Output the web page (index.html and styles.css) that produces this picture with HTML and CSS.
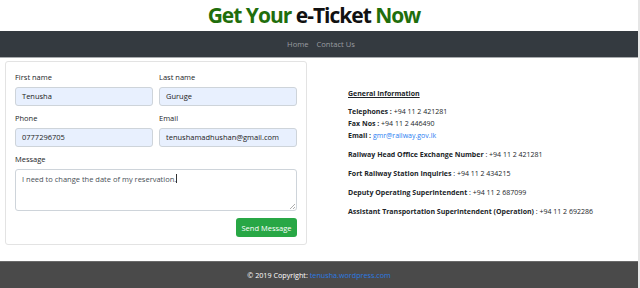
FILE: index.html
```html
<!DOCTYPE html>
<html>
<head>
<meta charset="utf-8">
<link rel="stylesheet" href="styles.css">
</head>
<body>
<div class="page">
  <h1 class="title"><span class="g">Get Your</span> e-Ticket <span class="g">Now</span></h1>
  <nav class="nav">
    <a class="nav-link">Home</a>
    <a class="nav-link">Contact Us</a>
  </nav>
  <main class="main">
    <section class="card">
      <div class="row">
        <div class="field">
          <label class="label">First name</label>
          <div class="input filled">Tenusha</div>
        </div>
        <div class="field">
          <label class="label">Last name</label>
          <div class="input filled">Guruge</div>
        </div>
      </div>
      <div class="row">
        <div class="field">
          <label class="label">Phone</label>
          <div class="input filled">0777296705</div>
        </div>
        <div class="field">
          <label class="label">Email</label>
          <div class="input filled">tenushamadhushan@gmail.com</div>
        </div>
      </div>
      <div class="field">
        <label class="label">Message</label>
        <div class="textarea">I need to change the date of my reservation.<span class="caret"></span>
          <svg class="grip" width="6" height="6" viewBox="0 0 6 6"><path d="M6 1L1 6M6 4L4 6" stroke="#999" stroke-width="0.8"/></svg>
        </div>
      </div>
      <div class="actions">
        <button class="btn">Send Message</button>
      </div>
    </section>
    <section class="info">
      <p class="heading">General Information</p>
      <p class="block">
        <span class="line"><b>Telephones :</b> +94 11 2 421281</span>
        <span class="line"><b>Fax Nos :</b> +94 11 2 446490</span>
        <span class="line"><b>Email :</b> <a class="link">gmr@railway.gov.lk</a></span>
      </p>
      <p class="block"><b>Railway Head Office Exchange Number</b> : +94 11 2 421281</p>
      <p class="block"><b>Fort Railway Station Inquiries</b> : +94 11 2 434215</p>
      <p class="block"><b>Deputy Operating Superintendent</b> : +94 11 2 687099</p>
      <p class="block"><b>Assistant Transportation Superintendent (Operation)</b> : +94 11 2 692286</p>
    </section>
  </main>
  <footer class="footer">© 2019 Copyright: <a class="flink">tenusha.wordpress.com</a></footer>
</div>
</body>
</html>
```

FILE: styles.css
```css
* { box-sizing: border-box; }
html, body { margin: 0; padding: 0; background: #fff; }
body { font-family: "Open Sans", "Noto Sans", sans-serif; color: #212529; }
.page {
  width: 640px;
  height: 288px;
  display: flex;
  flex-direction: column;
  border-right: 2px solid #e6e6e6;
}
.title {
  margin: 0;
  height: 31px;
  line-height: 31px;
  text-align: center;
  font-size: 21px;
  font-weight: 700;
  letter-spacing: -1px;
  color: #111;
  padding-right: 10px;
}
.title .g { color: #1f6e0c; }
.nav {
  height: 27px;
  background: #343a40;
  border-bottom: 1px solid #a8abae;
  display: flex;
  justify-content: center;
  align-items: center;
  gap: 8px;
  padding-left: 4px;
}
.nav-link { color: #9a9da1; font-size: 7.6px; }
.main {
  flex: 1;
  display: flex;
  padding-top: 3px;
}
.card {
  margin-left: 5px;
  width: 302px;
  height: 184px;
  border: 1px solid #e3e3e3;
  border-radius: 3px;
  padding: 9px 9px 8px 9px;
  display: flex;
  flex-direction: column;
  gap: 6px;
}
.row { display: flex; gap: 6px; }
.row .field { flex: 1; }
.field { display: flex; flex-direction: column; }
.label {
  font-size: 7.5px;
  line-height: 12px;
  height: 12px;
  margin-bottom: 4px;
  color: #212529;
}
.input {
  height: 19px;
  line-height: 17px;
  border: 1px solid #ced4da;
  border-radius: 3px;
  padding-left: 6px;
  font-size: 7.5px;
  color: #222;
}
.input.filled { background: #e8f0fe; }
.textarea {
  position: relative;
  height: 42px;
  border: 1px solid #ced4da;
  border-radius: 3px;
  padding: 3px 6px;
  font-size: 7.5px;
  line-height: 12px;
  color: #495057;
}
.caret {
  display: inline-block;
  width: 1px;
  height: 9px;
  background: #333;
  vertical-align: -1px;
}
.grip { position: absolute; right: 1px; bottom: 1px; }
.actions { display: flex; justify-content: flex-end; margin-top: 1px; }
.btn {
  height: 19px;
  width: 61px;
  padding: 0;
  border: none;
  border-radius: 3px;
  background: #28a745;
  color: #fff;
  font-family: inherit;
  font-size: 7.5px;
}
.info {
  padding-left: 41px;
  padding-top: 27px;
  font-size: 7px;
  color: #212529;
}
.info p { margin: 0; }
.heading {
  font-weight: 700;
  text-decoration: underline;
  line-height: 12px;
  margin-bottom: 6px !important;
}
.block { line-height: 12px; margin-bottom: 7px !important; }
.line { display: block; }
.info b { font-weight: 700; }
.link { color: #2a7ef2; }
.footer {
  height: 27px;
  background: #4a4a4a;
  border-top: 1px solid #6a6a6a;
  color: #fff;
  font-size: 7.2px;
  display: flex;
  align-items: center;
  justify-content: center;
}
.flink { color: #2a7ae2; margin-left: 2px; }
```
